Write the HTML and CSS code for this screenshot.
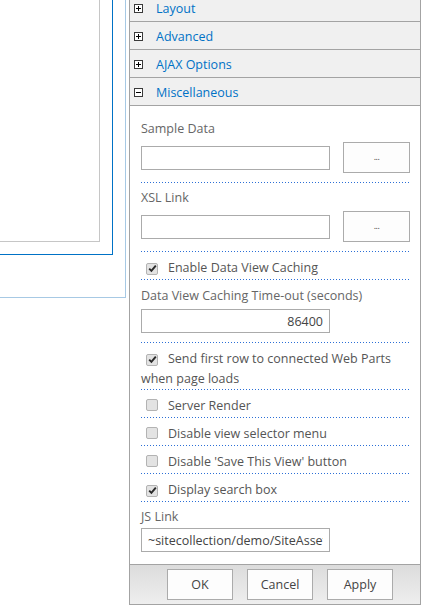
FILE: index.html
```html
<!DOCTYPE html>
<html lang="en">
<head>
<meta charset="utf-8">
<title>Tool Pane</title>
<link rel="stylesheet" href="styles.css">
</head>
<body>
<div class="page">
  <div class="zone">
    <div class="zone-mid">
      <div class="zone-inner"></div>
    </div>
  </div>

  <aside class="toolpane">
    <div class="cat">
      <svg class="toggle" width="9" height="9" viewBox="0 0 9 9"><rect x="0.5" y="0.5" width="8" height="8" fill="#fff" stroke="#3a3a3a"/><path d="M2 4.5h5M4.5 2v5" stroke="#000" stroke-width="1"/></svg>
      <span class="cat-title">Layout</span>
    </div>
    <div class="cat">
      <svg class="toggle" width="9" height="9" viewBox="0 0 9 9"><rect x="0.5" y="0.5" width="8" height="8" fill="#fff" stroke="#3a3a3a"/><path d="M2 4.5h5M4.5 2v5" stroke="#000" stroke-width="1"/></svg>
      <span class="cat-title">Advanced</span>
    </div>
    <div class="cat">
      <svg class="toggle" width="9" height="9" viewBox="0 0 9 9"><rect x="0.5" y="0.5" width="8" height="8" fill="#fff" stroke="#3a3a3a"/><path d="M2 4.5h5M4.5 2v5" stroke="#000" stroke-width="1"/></svg>
      <span class="cat-title">AJAX Options</span>
    </div>
    <div class="cat">
      <svg class="toggle" width="9" height="9" viewBox="0 0 9 9"><rect x="0.5" y="0.5" width="8" height="8" fill="#fff" stroke="#3a3a3a"/><path d="M2 4.5h5" stroke="#000" stroke-width="1"/></svg>
      <span class="cat-title">Miscellaneous</span>
    </div>

    <div class="cat-body">
      <div class="field">
        <div class="lbl">Sample Data</div>
        <div class="picker">
          <input class="txt" type="text" value="">
          <button class="btn-dots" type="button">...</button>
        </div>
      </div>

      <div class="field">
        <div class="lbl">XSL Link</div>
        <div class="picker">
          <input class="txt" type="text" value="">
          <button class="btn-dots" type="button">...</button>
        </div>
      </div>

      <div class="cb-row">
        <span class="cb"><svg width="9" height="9" viewBox="0 0 9 9"><path d="M1.2 4.6 3.4 6.9 7.8 1.6" fill="none" stroke="#2a2a2a" stroke-width="1.9"/></svg></span>Enable Data View Caching
      </div>

      <div class="field field-timeout">
        <div class="lbl">Data View Caching Time-out (seconds)</div>
        <input class="txt txt-num" type="text" value="86400">
      </div>

      <div class="cb-row cb-wrap">
        <span class="cb"><svg width="9" height="9" viewBox="0 0 9 9"><path d="M1.2 4.6 3.4 6.9 7.8 1.6" fill="none" stroke="#2a2a2a" stroke-width="1.9"/></svg></span>Send first row to connected Web Parts when page loads
      </div>

      <div class="cb-row">
        <span class="cb"></span>Server Render
      </div>

      <div class="cb-row">
        <span class="cb"></span>Disable view selector menu
      </div>

      <div class="cb-row">
        <span class="cb"></span>Disable 'Save This View' button
      </div>

      <div class="cb-row">
        <span class="cb"><svg width="9" height="9" viewBox="0 0 9 9"><path d="M1.2 4.6 3.4 6.9 7.8 1.6" fill="none" stroke="#2a2a2a" stroke-width="1.9"/></svg></span>Display search box
      </div>

      <div class="field field-last">
        <div class="lbl">JS Link</div>
        <input class="txt" type="text" value="~sitecollection/demo/SiteAssets/scripts/view.js">
      </div>
    </div>

    <div class="footer">
      <button class="btn" type="button">OK</button>
      <button class="btn" type="button">Cancel</button>
      <button class="btn" type="button">Apply</button>
    </div>
  </aside>
</div>
</body>
</html>
```

FILE: styles.css
```css
* { box-sizing: border-box; }

html, body {
  margin: 0;
  background: #fff;
}

body {
  font-family: "Open Sans", "Noto Sans", sans-serif;
  font-size: 12.5px;
  color: #555;
  overflow: hidden;
}

.page {
  display: flex;
  align-items: flex-start;
}

/* web part zone edges on the left */
.zone {
  flex: 0 0 auto;
  width: 126px;
  height: 298px;
  border-right: 1px solid #a7c9e4;
  border-bottom: 1px solid #a7c9e4;
  padding: 0 12px 42px 0;
}

.zone-mid {
  height: 100%;
  border-right: 1px solid #0072c6;
  border-bottom: 1px solid #0072c6;
  padding: 0 12px 12px 0;
}

.zone-inner {
  height: 100%;
  border-right: 1px solid #c6c6c6;
  border-bottom: 1px solid #c6c6c6;
}

/* tool pane */
.toolpane {
  flex: 0 0 auto;
  width: 292px;
  margin-left: 3px;
  margin-top: -6px;
  border: 1px solid #a3a3a3;
  border-top: none;
  background: #fff;
}

.cat {
  height: 28px;
  display: flex;
  align-items: center;
  padding-left: 4px;
  background: #f0f0f0;
  border-bottom: 1px solid #a3a3a3;
}

.toggle {
  flex: 0 0 auto;
  display: block;
  margin-right: 13px;
  margin-top: 1px;
}

.cat-title {
  color: #0072c6;
  font-size: 12.5px;
  line-height: 16px;
  margin-top: 2px;
}

.cat-body {
  padding: 8px 10px 12px 11px;
}

.field,
.cb-row {
  background-image: linear-gradient(to right, #2c6fd6 1px, transparent 1px);
  background-size: 3px 1px;
  background-repeat: repeat-x;
  background-position: left bottom;
}

.field {
  padding: 7px 0 10px;
}

.field-timeout {
  padding-top: 8px;
}

.field-last {
  padding-bottom: 0;
  background: none;
}

.lbl {
  line-height: 16px;
  margin-bottom: 5px;
  color: #666;
  white-space: nowrap;
}

.field-last .lbl {
  margin-bottom: 3px;
}

.picker {
  display: flex;
  align-items: center;
  justify-content: space-between;
}

.txt {
  display: block;
  width: 189px;
  height: 24px;
  margin: 0;
  padding: 0 6px;
  border: 1px solid #ababab;
  border-radius: 0;
  background: #fff;
  font-family: inherit;
  font-size: 12.5px;
  color: #444;
  outline: none;
}

.txt-num {
  text-align: right;
}

.btn-dots {
  width: 67px;
  height: 31px;
  margin: 0;
  padding: 0 0 3px;
  border: 1px solid #ababab;
  border-radius: 0;
  background: #fdfdfd;
  font-family: inherit;
  font-size: 9px;
  color: #444;
  letter-spacing: -0.5px;
}

.cb-row {
  padding: 6px 0 2px;
  line-height: 20px;
  color: #555;
}

.cb-wrap {
  padding-bottom: 1px;
}

.cb {
  display: inline-flex;
  align-items: center;
  justify-content: center;
  width: 12px;
  height: 12px;
  margin: 0 10px 0 5px;
  vertical-align: -1px;
  background: #e3e3e3;
  border: 1px solid #b3b3b3;
  border-radius: 2px;
}

.cb svg {
  display: block;
}

.footer {
  display: flex;
  justify-content: flex-end;
  gap: 14px;
  padding: 4px 27px 4px 0;
  border-top: 1px solid #a3a3a3;
  background: linear-gradient(to bottom, #dcdcdc, #eeeeee);
}

.btn {
  width: 66px;
  height: 31px;
  margin: 0;
  padding: 0;
  border: 1px solid #ababab;
  border-radius: 0;
  background: #fdfdfd;
  font-family: inherit;
  font-size: 12.5px;
  color: #444;
}
```
